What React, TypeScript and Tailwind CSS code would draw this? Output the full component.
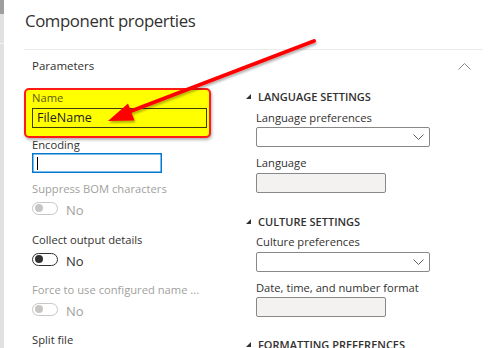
const font = { fontFamily: '"Open Sans", "Noto Sans", sans-serif' };

function Toggle({ on, disabled }: { on?: boolean; disabled?: boolean }) {
  const c = disabled ? "border-[#c8c6c4]" : "border-[#323130]";
  const k = disabled ? "bg-[#c8c6c4]" : "bg-[#323130]";
  return (
    <div className="flex h-[22px] items-center">
      <div className={`flex h-[13px] w-[26px] items-center rounded-full border ${c} pl-[2px]`}>
        <div className={`h-[8px] w-[8px] rounded-full ${k} ${on ? "ml-auto mr-[2px]" : ""}`} />
      </div>
      <span
        className={`ml-[8px] pt-[3px] text-[13px] leading-[16px] ${disabled ? "text-[#a19f9d]" : "text-[#323130]"}`}
      >
        No
      </span>
    </div>
  );
}

function Label({ text, disabled, className = "" }: { text: string; disabled?: boolean; className?: string }) {
  return (
    <div
      className={`h-[16px] whitespace-nowrap text-[11.2px] leading-[16px] ${disabled ? "text-[#a19f9d]" : "text-[#323130]"} ${className}`}
    >
      {text}
    </div>
  );
}

function Heading({ text, className = "" }: { text: string; className?: string }) {
  return (
    <div className={`flex h-[16px] items-center ${className}`}>
      <svg width="6" height="6" viewBox="0 0 6 6" className="mb-[1px]">
        <polygon points="5,0 5,5 0,5" fill="#323130" />
      </svg>
      <span className="ml-[6px] whitespace-nowrap text-[11px] font-semibold leading-[16px] text-[#323130]">{text}</span>
    </div>
  );
}

function Dropdown({ className = "" }: { className?: string }) {
  return (
    <div
      className={`flex h-[20px] w-[174px] items-center justify-end rounded-[2px] border border-[#8a8886] pr-[5px] ${className}`}
    >
      <svg width="11" height="6" viewBox="0 0 11 6">
        <path d="M0.5 0.5 L5.5 5.5 L10.5 0.5" fill="none" stroke="#605e5c" strokeWidth="1" />
      </svg>
    </div>
  );
}

function ReadOnly({ className = "" }: { className?: string }) {
  return <div className={`h-[20px] w-[130px] rounded-[2px] border border-[#8a8886] bg-[#f3f2f1] ${className}`} />;
}

export default function App() {
  return (
    <div className="relative flex h-[348px] w-[490px] overflow-hidden bg-white" style={font}>
      {/* side strip from the page behind */}
      <div className="flex w-[4px] flex-col">
        <div className="h-[14px] bg-[#9e9e9e]" />
        <div className="h-[29px] bg-[#e3e1df]" />
        <div className="h-[1px] bg-[#f5f5f5]" />
        <div className="flex-1 bg-[#e3e1df]" />
      </div>

      <div className="flex-1 pl-[20px] pr-[7px]">
        <div className="h-[50px] border-b border-[#edebe9] pl-[1px] pt-[8px]">
          <h1 className="text-[16.8px] leading-[26px] tracking-[-0.4px] text-[#323130]">Component properties</h1>
        </div>

        <div className="flex h-[32px] items-center justify-between pl-[8px] pr-[12px]">
          <span className="text-[11.5px] text-[#323130]">Parameters</span>
          <svg width="13" height="7" viewBox="0 0 13 7">
            <path d="M0.5 6.5 L6.5 0.5 L12.5 6.5" fill="none" stroke="#8a8886" strokeWidth="1" />
          </svg>
        </div>

        <div className="flex">
          {/* left column */}
          <div className="w-[187px]">
            <div className="mt-[6px] h-[50px] rounded-[5px] border-2 border-[#ff1a1a] bg-[#ffff00] pl-[6px] pr-[2px] shadow-[1px_2px_3px_rgba(0,0,0,0.3)]">
              <div className="h-[16px] text-[11.2px] leading-[16px] text-[#5c5c10]">Name</div>
              <div className="mt-[2px] flex h-[20px] items-center border border-[#3c3c10] pl-[4px] text-[12.5px] text-[#222]">
                FileName
              </div>
            </div>
            <div className="pl-[8px]">
              <Label text="Encoding" className="mt-[-1px]" />
              <div className="flex h-[20px] w-[130px] items-center border border-[#0078d4] pl-[4px] shadow-[inset_0_0_0_0.5px_#0078d4]">
                <div className="h-[13px] w-[1px] bg-black" />
              </div>

              <Label text="Suppress BOM characters" disabled className="mt-[8px]" />
              <Toggle disabled />

              <Label text="Collect output details" className="mt-[13px]" />
              <Toggle />

              <Label text="Force to use configured name ..." disabled className="mt-[12px]" />
              <Toggle disabled />

              <Label text="Split file" className="mt-[12px]" />
            </div>
          </div>

          {/* right column */}
          <div className="ml-[35px]">
            <Heading text="LANGUAGE SETTINGS" className="mt-[7px]" />
            <div className="pl-[10px]">
              <Label text="Language preferences" className="mt-[5px]" />
              <Dropdown className="mt-[1px]" />
              <Label text="Language" className="mt-[8px]" />
              <ReadOnly className="mt-[2px]" />
            </div>

            <Heading text="CULTURE SETTINGS" className="mt-[21px]" />
            <div className="pl-[10px]">
              <Label text="Culture preferences" className="mt-[4px]" />
              <Dropdown className="mt-[2px]" />
              <Label text="Date, time, and number format" className="mt-[8px]" />
              <ReadOnly className="mt-[1px]" />
            </div>

            <Heading text="FORMATTING PREFERENCES" className="mt-[20px]" />
          </div>
        </div>
      </div>

      {/* red annotation arrow */}
      <svg className="pointer-events-none absolute inset-0" width="490" height="348" viewBox="0 0 490 348">
        <defs>
          <filter id="sh" x="-10%" y="-10%" width="130%" height="140%">
            <feDropShadow dx="1" dy="2" stdDeviation="1.2" floodColor="#000" floodOpacity="0.3" />
          </filter>
        </defs>
        <g filter="url(#sh)">
          <line x1="314" y1="41" x2="126" y2="113" stroke="#ff0000" strokeWidth="4" strokeLinecap="round" />
          <polygon points="108,121 128,103.6 134.5,120.4" fill="#ff0000" />
        </g>
      </svg>
    </div>
  );
}
